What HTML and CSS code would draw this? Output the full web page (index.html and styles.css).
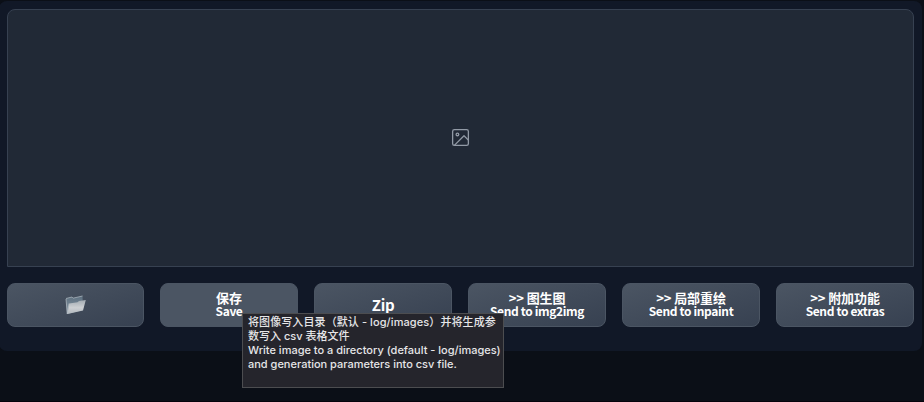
FILE: index.html
```html
<!DOCTYPE html>
<html lang="zh-CN">
<head>
<meta charset="utf-8">
<title>Gallery</title>
<link rel="stylesheet" href="styles.css">
</head>
<body>
<main class="panel">
  <section class="gallery">
    <svg class="placeholder" viewBox="0 0 24 24" fill="none" stroke="currentColor" stroke-width="1.5" stroke-linecap="round" stroke-linejoin="round"><rect x="3" y="3" width="18" height="18" rx="2"/><circle cx="8.5" cy="8.5" r="1.5"/><path d="M21 15l-5-5L5 21"/></svg>
  </section>
  <div class="actions">
    <button class="btn">
      <svg class="folder" viewBox="0 0 22 20">
        <defs>
          <linearGradient id="back" x1="0" y1="0" x2="0" y2="1"><stop offset="0" stop-color="#5d7080"/><stop offset="1" stop-color="#8997a3"/></linearGradient>
          <linearGradient id="front" x1="0" y1="0" x2="0" y2="1"><stop offset="0" stop-color="#a3abb2"/><stop offset=".55" stop-color="#cdd0d3"/><stop offset="1" stop-color="#b0b7bd"/></linearGradient>
        </defs>
        <path d="M1 3.5L7 2l1 1.2L17.500 1l.5 14L2 19z" fill="url(#back)"/>
        <path d="M1 3.500L7 2l1 1.200L17.500 1" fill="none" stroke="#a7b3bb" stroke-width=".8"/>
        <path d="M4.200 8.500l8.300-1.200 1.500-1.300 6.800-1L18 15.500 2.500 19z" fill="url(#front)"/>
        <path d="M1 4l1.300 15 1.700-10.500" fill="none" stroke="#b7c0c7" stroke-width=".7"/>
      </svg>
    </button>
    <button class="btn hover"><span>保存</span><span class="en">Save</span></button>
    <button class="btn single"><span>Zip</span></button>
    <button class="btn"><span>&gt;&gt; 图生图</span><span class="en">Send to img2img</span></button>
    <button class="btn"><span>&gt;&gt; 局部重绘</span><span class="en">Send to inpaint</span></button>
    <button class="btn"><span>&gt;&gt; 附加功能</span><span class="en">Send to extras</span></button>
  </div>
</main>
<div class="tooltip" role="tooltip">
  <div class="zh">将图像写入目录（默认 - log/images）并将生成参</div>
  <div>数写入 csv 表格文件</div>
  <div>Write image to a directory (default - log/images)</div>
  <div>and generation parameters into csv file.</div>
</div>
</body>
</html>
```
FILE: styles.css
```css
* { box-sizing: border-box; }
body {
  margin: 0;
  height: 402px;
  padding-top: 1px;
  overflow: hidden;
  background: #0b0f17;
  border-bottom: 1px solid #05030c;
}
.panel {
  width: 923px;
  height: 350px;
  margin-left: -1px;
  padding: 8px;
  background: #111827;
  border-radius: 8px;
}
.gallery {
  display: flex;
  align-items: center;
  justify-content: center;
  height: 258px;
  padding: 0 1px 1px 0;
  background: #212936;
  border: 1px solid #374151;
  border-radius: 8px 8px 0 0;
}
.placeholder { width: 21px; height: 21px; color: #929aa6; }
.actions {
  display: grid;
  grid-template-columns: 137px repeat(5, 138px);
  gap: 16px;
  margin-top: 16px;
}
.btn {
  display: flex;
  flex-direction: column;
  align-items: center;
  justify-content: center;
  height: 44px;
  padding: 0 0 2px;
  border: 1px solid #4b5563;
  border-radius: 8px;
  background: linear-gradient(to bottom right, #4b5563, #374151);
  color: #fff;
  font: bold 13px/13px "Noto Sans CJK SC", sans-serif;
  letter-spacing: -0.1px;
  white-space: nowrap;
}
.btn.hover { background: #4b5563; }
.btn .en { font-size: 12px; letter-spacing: -0.36px; }
.btn.single { padding-bottom: 1px; font-size: 15px; letter-spacing: -0.3px; }
.folder { width: 22px; height: 20px; margin-top: 2px; }
.tooltip {
  position: absolute;
  left: 242px;
  top: 313px;
  width: 262px;
  height: 75px;
  padding: 1px 5px;
  border: 1px solid #4c4d50;
  background: #25252c;
  color: #e6e6e8;
  font: 500 11px/14px Inter, "Noto Sans CJK SC", sans-serif;
  white-space: nowrap;
}
.tooltip .zh { letter-spacing: 0.09px; }
```
